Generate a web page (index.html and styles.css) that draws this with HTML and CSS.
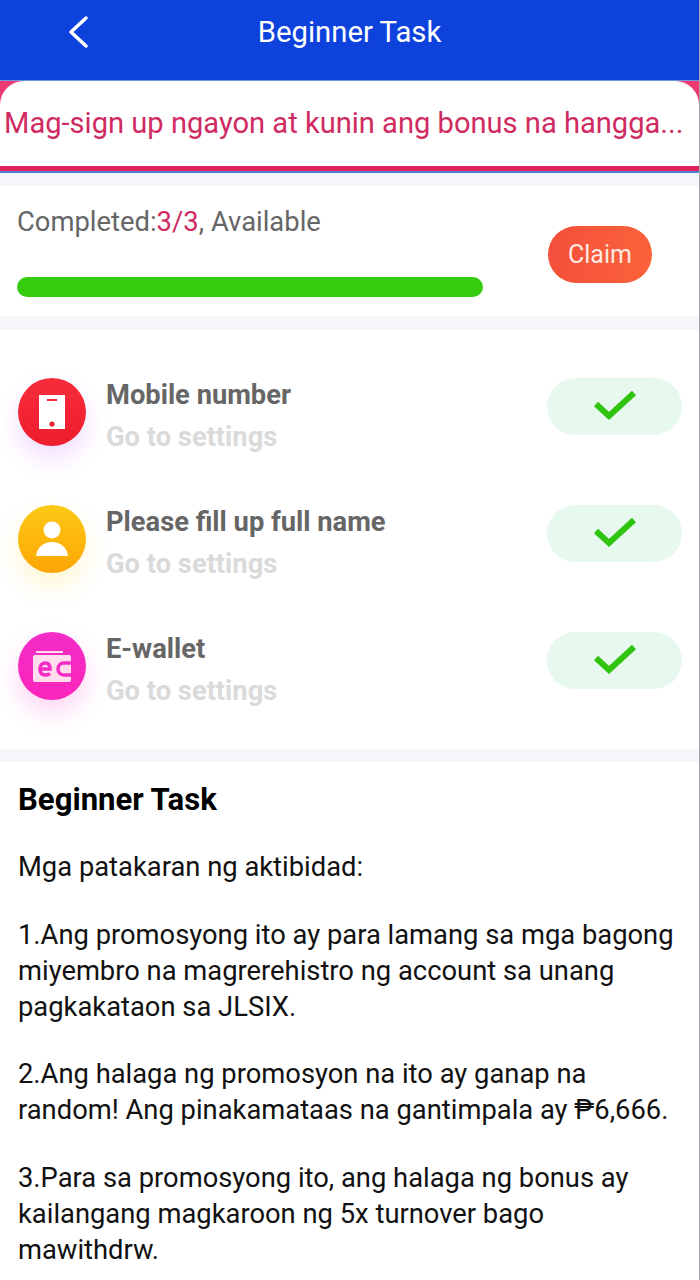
FILE: index.html
```html
<!DOCTYPE html>
<html lang="en">
<head>
    <meta charset="UTF-8">
    <meta name="viewport" content="width=device-width, initial-scale=1.0">
    <title>Beginner Task</title>
    <link rel="stylesheet" href="styles.css">
</head>
<body>

    <header class="topbar">
        <svg class="back-icon" width="24" height="36" viewBox="0 0 24 36">
            <path d="M20 4 L5 18 L20 32" fill="none" stroke="#fff" stroke-width="3.5" stroke-linecap="round" stroke-linejoin="round"/>
        </svg>
        <span>Beginner Task</span>
    </header>

    <!-- Notice -->
    <div class="notice">
        <div class="notice-inner">
            <p class="notice-text">Mag-sign up ngayon at kunin ang bonus na hangga...</p>
        </div>
    </div>

    <!-- Progress -->
    <section class="progress-card">
        <div class="progress-info">
            <p class="progress-label">Completed:<span class="count">3/3</span>, Available</p>
            <div class="progress-bar"></div>
        </div>
        <button class="claim-btn">Claim</button>
    </section>

    <!-- Task list -->
    <section class="task-list">
        <div class="task">
            <div class="task-icon icon-red">
                <svg width="28" height="36" viewBox="0 0 28 36">
                    <path fill-rule="evenodd" fill="#fff" d="M1 1 H27 V35 H1 Z M9 5 V7 H19 V5 Z"/>
                    <circle cx="14" cy="30" r="2.6" fill="#e8202f"/>
                </svg>
            </div>
            <div class="task-text">
                <div class="task-title">Mobile number</div>
                <div class="task-link">Go to settings</div>
            </div>
            <div class="task-done">
                <svg class="check" width="44" height="32" viewBox="0 0 44 32"><path d="M3 15 L16 27 L41 4" fill="none" stroke="#2fc40f" stroke-width="6"/></svg>
            </div>
        </div>
        <div class="task">
            <div class="task-icon icon-yellow">
                <svg width="32" height="36" viewBox="0 0 32 36">
                    <circle cx="16" cy="9" r="8.5" fill="#fff"/>
                    <path fill="#fff" d="M0 35 C1 26 8 21 16 21 C24 21 31 26 32 35 Z"/>
                </svg>
            </div>
            <div class="task-text">
                <div class="task-title">Please fill up full name</div>
                <div class="task-link">Go to settings</div>
            </div>
            <div class="task-done">
                <svg class="check" width="44" height="32" viewBox="0 0 44 32"><path d="M3 15 L16 27 L41 4" fill="none" stroke="#2fc40f" stroke-width="6"/></svg>
            </div>
        </div>
        <div class="task">
            <div class="task-icon icon-pink">
                <svg width="38" height="32" viewBox="0 0 38 32">
                    <path fill="none" stroke="#fde" stroke-width="2" d="M3 2 H30"/>
                    <rect x="0" y="5" width="38" height="27" rx="2" fill="#fde"/>
                    <path fill="none" stroke="#f52cc6" stroke-width="3.6" d="M7 19 H17 C17 15 15 13 12.5 13 C9 13 7 15.5 7 19 C7 23 9 25 12.5 25 C14.5 25 16 24.5 17 23.5"/>
                    <path fill="none" stroke="#f52cc6" stroke-width="3.6" d="M38 13 H31 C27 13 25 16 25 19 C25 22 27 25 31 25 H38"/>
                </svg>
            </div>
            <div class="task-text">
                <div class="task-title">E-wallet</div>
                <div class="task-link">Go to settings</div>
            </div>
            <div class="task-done">
                <svg class="check" width="44" height="32" viewBox="0 0 44 32"><path d="M3 15 L16 27 L41 4" fill="none" stroke="#2fc40f" stroke-width="6"/></svg>
            </div>
        </div>
    </section>

    <!-- Rules -->
    <section class="rules">
        <h2>Beginner Task</h2>
        <p>Mga patakaran ng aktibidad:</p>
        <p>1.Ang promosyong ito ay para lamang sa mga bagong miyembro na magrerehistro ng account sa unang pagkakataon sa JLSIX.</p>
        <p>2.Ang halaga ng promosyon na ito ay ganap na random! Ang pinakamataas na gantimpala ay ₱6,666.</p>
        <p>3.Para sa promosyong ito, ang halaga ng bonus ay kailangang magkaroon ng 5x turnover bago mawithdrw.</p>
    </section>

</body>
</html>
```

FILE: styles.css
```css
* {
    box-sizing: border-box;
}

body {
    margin: 0;
    font-family: Roboto, "Noto Sans", sans-serif;
    background-color: #f5f6fa;
    border-right: 1px solid #a8a8ac;
}

.topbar {
    height: 81px;
    background-color: #0d43dc;
    border-bottom: 1px solid #6f95dd;
    color: white;
    font-size: 29.3px;
    display: flex;
    align-items: center;
    justify-content: center;
    position: relative;
    padding-bottom: 17px;
}

.back-icon {
    position: absolute;
    left: 66px;
    top: 14px;
}

/* Notice */
.notice {
    height: 92px;
    background-color: #ee3a72;
    border-bottom: 2px solid #4f7fd0;
}

.notice-inner {
    height: 90px;
    background: white;
    border-radius: 24px 24px 0 0;
    border-bottom: 5px solid #e2245c;
    padding: 24px 0 0 4px;
}

.notice-text {
    margin: 0;
    font-size: 29.1px;
    line-height: 36px;
    color: #cf2b62;
    white-space: nowrap;
}

/* Progress */
.progress-card {
    margin-top: 13px;
    height: 130px;
    background: white;
    display: flex;
    padding: 18px 47px 0 17px;
    justify-content: space-between;
}

.progress-info {
    width: 466px;
}

.progress-label {
    margin: 0;
    font-size: 27.4px;
    line-height: 36px;
    color: #666;
}

.count {
    color: #cf2b62;
}

.progress-bar {
    margin-top: 37px;
    height: 20px;
    width: 100%;
    background-color: #35cc10;
    border-radius: 10px;
}

.claim-btn {
    margin-top: 22px;
    width: 104px;
    height: 57px;
    border: none;
    border-radius: 29px;
    background: linear-gradient(90deg, #f4503c, #fb6239);
    color: #fde9e0;
    font-family: inherit;
    font-size: 25px;
    padding: 0;
}

/* Task list */
.task-list {
    margin-top: 14px;
    height: 419px;
    background: white;
    padding: 48px 17px 0 18px;
}

.task {
    height: 127px;
    display: flex;
}

.task-icon {
    width: 68px;
    height: 68px;
    border-radius: 50%;
    display: flex;
    align-items: center;
    justify-content: center;
    flex-shrink: 0;
}

.icon-red {
    background: linear-gradient(180deg, #f92c3c, #ec1e2e);
    box-shadow: 0 12px 24px rgba(190, 80, 255, 0.2);
}

.icon-yellow {
    background: linear-gradient(180deg, #fcca14, #fea505);
    box-shadow: 0 12px 24px rgba(255, 225, 80, 0.25);
}

.icon-pink {
    background: linear-gradient(180deg, #f22dc6, #fb26bc);
    box-shadow: 0 12px 24px rgba(245, 60, 200, 0.22);
}

.task-text {
    margin-left: 20px;
    flex: 1;
}

.task-title {
    font-size: 27.3px;
    font-weight: 700;
    line-height: 36px;
    margin-top: -1px;
    color: #666;
}

.task-link {
    font-size: 27.3px;
    font-weight: 700;
    line-height: 36px;
    margin-top: 6px;
    color: #dadada;
}

.task-done {
    width: 135px;
    height: 57px;
    background-color: #e7f8ef;
    border-radius: 29px;
    display: flex;
    align-items: center;
    justify-content: center;
}

.check {
    margin-bottom: 3px;
}

/* Rules */
.rules {
    margin-top: 13px;
    height: 518px;
    background: white;
    padding: 18px 18px 0;
    color: #111;
}

.rules h2 {
    margin: 0 0 29px;
    font-size: 31.1px;
    line-height: 40px;
    font-weight: 700;
    color: black;
}

.rules p {
    margin: 0 0 31.5px;
    font-size: 27.35px;
    line-height: 36px;
}
```
